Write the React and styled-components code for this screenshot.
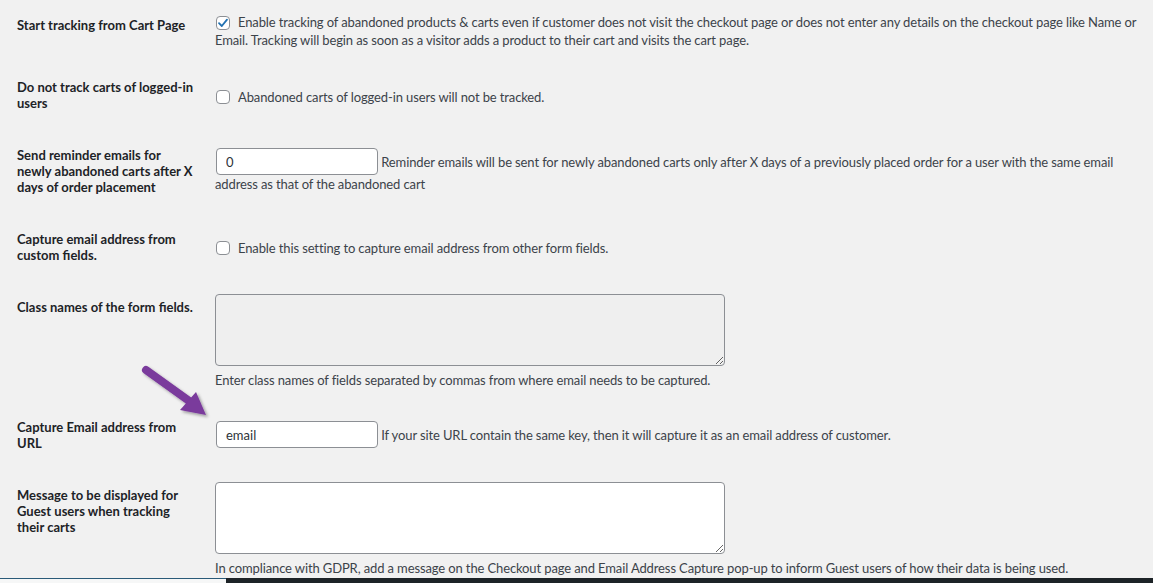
import styled, { createGlobalStyle } from "styled-components";

const Global = createGlobalStyle`
  html, body {
    margin: 0;
    padding: 0;
    background: #f1f1f1;
  }
  body {
    font-family: Lato, "Liberation Sans", sans-serif;
    color: #3c434a;
    font-size: 13px;
  }
`;

const rows = [
  {
    label: "Start tracking from Cart Page",
    h: 62,
    ft: 13,
    kind: "check",
    checked: true,
    text:
      "Enable tracking of abandoned products & carts even if customer does not visit the checkout page or does not enter any details on the checkout page like Name or Email. Tracking will begin as soon as a visitor adds a product to their cart and visits the cart page.",
  },
  {
    label: "Do not track carts of logged-in users",
    h: 68,
    ft: 26,
    kind: "check",
    text: "Abandoned carts of logged-in users will not be tracked.",
  },
  {
    label: "Send reminder emails for newly abandoned carts after X days of order placement",
    h: 84,
    ft: 18,
    kind: "input",
    value: "0",
    text:
      "Reminder emails will be sent for newly abandoned carts only after X days of a previously placed order for a user with the same email address as that of the abandoned cart",
  },
  {
    label: "Capture email address from custom fields.",
    h: 68,
    ft: 25,
    kind: "check",
    text: "Enable this setting to capture email address from other form fields.",
  },
  {
    label: "Class names of the form fields.",
    h: 120,
    ft: 12,
    kind: "area",
    muted: true,
    text: "Enter class names of fields separated by commas from where email needs to be captured.",
  },
  {
    label: "Capture Email address from URL",
    h: 68,
    ft: 19,
    kind: "input",
    value: "email",
    text: "If your site URL contain the same key, then it will capture it as an email address of customer.",
  },
  {
    label: "Message to be displayed for Guest users when tracking their carts",
    h: 108,
    ft: 12,
    kind: "area",
    text:
      "In compliance with GDPR, add a message on the Checkout page and Email Address Capture pop-up to inform Guest users of how their data is being used.",
  },
];

export default function App() {
  return (
    <Page>
      <Global />
      <Table>
        {rows.map((row) => (
          <Row key={row.label} $h={row.h}>
            <Th>{row.label}</Th>
            <Td $pt={row.ft}>
              {row.kind === "check" && (
                <Line>
                  <Check $on={row.checked}>
                    {row.checked && (
                      <svg width="12" height="12" viewBox="0 0 12 12">
                        <path
                          d="M2 6.2 L4.8 9 L10 2.6"
                          fill="none"
                          stroke="#2271b1"
                          strokeWidth="1.8"
                          strokeLinecap="round"
                          strokeLinejoin="round"
                        />
                      </svg>
                    )}
                  </Check>
                  {row.text}
                </Line>
              )}
              {row.kind === "input" && (
                <Line>
                  <TextInput defaultValue={row.value} /> {row.text}
                </Line>
              )}
              {row.kind === "area" && (
                <>
                  <Area $muted={row.muted} />
                  <Desc>{row.text}</Desc>
                </>
              )}
            </Td>
          </Row>
        ))}
      </Table>
      <Arrow width="80" height="60" viewBox="0 0 80 60">
        <defs>
          <filter id="sh" x="-20%" y="-20%" width="160%" height="160%">
            <feDropShadow dx="2" dy="2" stdDeviation="1.5" floodColor="#000" floodOpacity="0.35" />
          </filter>
        </defs>
        <g filter="url(#sh)">
          <line x1="6" y1="6" x2="52" y2="39" stroke="#7a3a9c" strokeWidth="8" strokeLinecap="round" />
          <polygon points="66,51 40,46 56,28" fill="#7a3a9c" />
        </g>
      </Arrow>
      <Footer>
        <FootLeft />
        <FootRight />
      </Footer>
    </Page>
  );
}

const Page = styled.div`
  position: relative;
  width: 1153px;
  height: 583px;
  overflow: hidden;
  display: flex;
  flex-direction: column;
`;

const Table = styled.div`
  display: flex;
  flex-direction: column;
  padding: 0 8px 0 17px;
`;

const Row = styled.div`
  display: grid;
  grid-template-columns: 198px 1fr;
  align-items: start;
  height: ${(p) => p.$h}px;
`;

const Th = styled.div`
  padding-top: 17px;
  padding-right: 20px;
  font-weight: 700;
  color: #1d2327;
  line-height: 16px;
`;

const Td = styled.div`
  padding-top: ${(p) => p.$pt}px;
  line-height: 18px;
  letter-spacing: -0.12px;
`;

const Line = styled.div`
  line-height: 18px;
`;

const Check = styled.span`
  display: inline-flex;
  align-items: center;
  justify-content: center;
  box-sizing: border-box;
  width: 14px;
  height: 14px;
  margin: 0 8px 0 1px;
  vertical-align: -2px;
  background: #fff;
  border: 1px solid #8c8f94;
  border-radius: 4px;
`;

const TextInput = styled.input`
  box-sizing: border-box;
  width: 162px;
  height: 27px;
  margin: 0 0 0 1px;
  padding: 0 9px;
  border: 1px solid #8c8f94;
  border-radius: 4px;
  background: #fff;
  color: #2c3338;
  font: 13px Lato, "Liberation Sans", sans-serif;
  vertical-align: baseline;
  outline: none;
`;

const Area = styled.textarea`
  display: block;
  box-sizing: border-box;
  width: 510px;
  height: 72px;
  margin: 0;
  border: 1px solid #8c8f94;
  border-radius: 4px;
  background: ${(p) => (p.$muted ? "#efefef" : "#fff")};
  outline: none;
  resize: vertical;
`;

const Desc = styled.p`
  margin: 5px 0 0;
  line-height: 18px;
`;

const Arrow = styled.svg`
  position: absolute;
  left: 140px;
  top: 364px;
`;

const Footer = styled.div`
  margin-top: auto;
  display: flex;
  height: 5px;
`;

const FootLeft = styled.div`
  width: 226px;
  box-sizing: border-box;
  border-top: 1px solid #2a5a78;
  background: #f6f7f7;
`;

const FootRight = styled.div`
  flex: 1;
  background: #1d2327;
`;
